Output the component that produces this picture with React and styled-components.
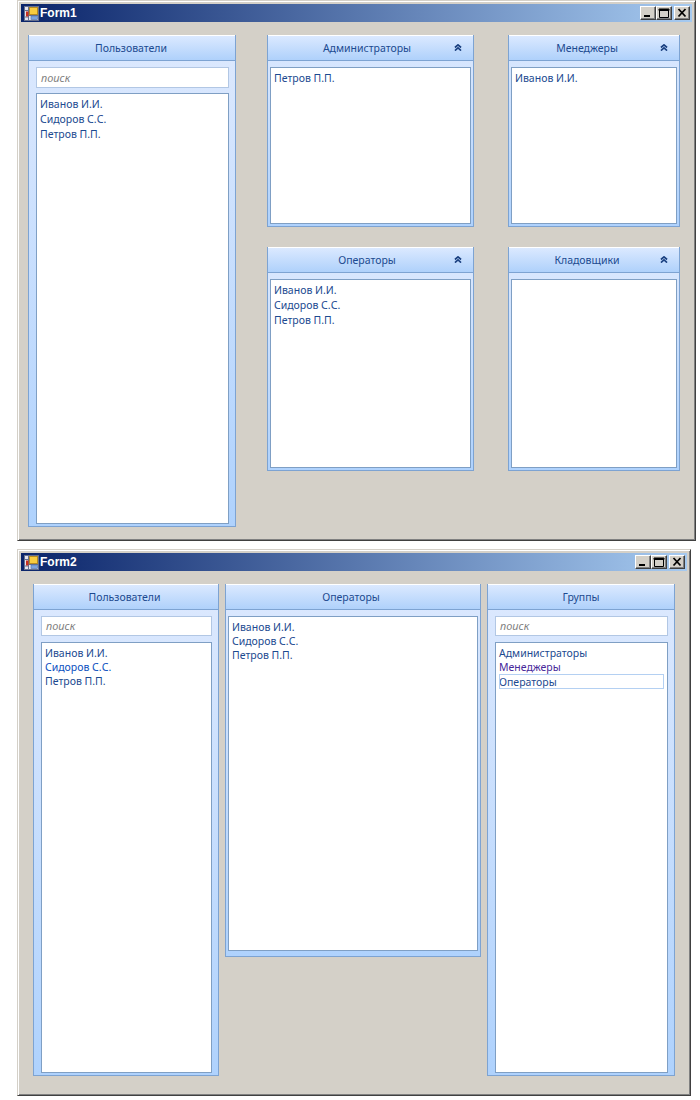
import React from 'react';
import styled, { createGlobalStyle } from 'styled-components';

const FONT = '"Noto Sans", "DejaVu Sans", sans-serif';
const C_TEXT = '#1c4a90';
const C_BORDER = '#7da3d2';
const C_LIST_BORDER = '#7f9fc4';

const GlobalStyle = createGlobalStyle`
  html, body {
    margin: 0;
    padding: 0;
    background: #fff;
  }
`;

const Page = styled.div`
  display: flex;
  flex-direction: column;
  gap: 8px;
  padding-left: 17px;
  font-family: ${FONT};
`;

const Window = styled.div`
  box-sizing: border-box;
  width: ${({ $width }) => $width}px;
  height: ${({ $height }) => $height}px;
  padding: 3px;
  background: #d4d0c8;
  border: 1px solid;
  border-color: #d4d0c8 #404040 #404040 #d4d0c8;
  box-shadow: inset 1px 1px 0 #fff, inset -1px -1px 0 #808080;
  display: flex;
  flex-direction: column;
`;

const TitleBar = styled.div`
  height: 18px;
  flex: none;
  display: flex;
  align-items: center;
  padding: 0 2px 0 3px;
  background: linear-gradient(90deg, #0a246a, #a6caf0);
`;

const TitleText = styled.span`
  margin-left: 1px;
  flex: 1;
  color: #fff;
  font: bold 12px "Liberation Sans", sans-serif;
`;

const WinButton = styled.button`
  box-sizing: border-box;
  width: 16px;
  height: 14px;
  margin-left: ${({ $gap }) => $gap || 0}px;
  padding: 0;
  display: flex;
  align-items: center;
  justify-content: center;
  background: #d4d0c8;
  border: 1px solid;
  border-color: #fff #404040 #404040 #fff;
  box-shadow: inset -1px -1px 0 #808080;
`;

const WindowBody = styled.div`
  flex: 1;
  min-height: 0;
  display: flex;
  gap: ${({ $gap }) => $gap}px;
  padding: 13px 0 0 ${({ $left }) => $left}px;
`;

const GroupGrid = styled.div`
  display: grid;
  grid-template-columns: 207px 172px;
  grid-template-rows: 192px 224px;
  gap: 20px 34px;
`;

const Panel = styled.section`
  box-sizing: border-box;
  flex: none;
  width: ${({ $width }) => ($width ? `${$width}px` : 'auto')};
  height: ${({ $height }) => ($height ? `${$height}px` : 'auto')};
  display: flex;
  flex-direction: column;
  border: 1px solid ${C_BORDER};
  border-top: 0;
  background: linear-gradient(180deg, #dde9fe, #afd2fd);
`;

const PanelHeader = styled.header`
  position: relative;
  box-sizing: border-box;
  height: 26px;
  flex: none;
  display: flex;
  align-items: center;
  justify-content: center;
  padding-right: ${({ $shift }) => $shift}px;
  border-top: 1px solid #fff;
  border-bottom: 1px solid ${C_BORDER};
  background: linear-gradient(180deg, #dbe9ff, #afd1fb);
  color: ${C_TEXT};
  font-size: 10.5px;
`;

const Collapse = styled.svg`
  position: absolute;
  right: 11px;
  top: 8px;
  width: 8px;
  height: 7px;
`;

const PanelBody = styled.div`
  flex: 1;
  min-height: 0;
  display: flex;
  flex-direction: column;
  gap: ${({ $gap }) => $gap}px;
  padding: ${({ $pad }) => $pad};
`;

const SearchBox = styled.div`
  box-sizing: border-box;
  flex: none;
  height: ${({ $height }) => $height}px;
  display: flex;
  align-items: center;
  padding: 0 0 1px 4px;
  background: #fff;
  border: 1px solid #b2c7e4;
  color: #808080;
  font-size: 11px;
  font-style: italic;
`;

const List = styled.ul`
  box-sizing: border-box;
  flex: 1;
  min-height: 0;
  margin: 0;
  padding: 3px 3px 2px;
  list-style: none;
  background: #fff;
  border: 1px solid ${C_LIST_BORDER};
`;

const Item = styled.li`
  box-sizing: border-box;
  height: ${({ $row }) => $row}px;
  line-height: ${({ $row }) => $row}px;
  color: ${({ $color }) => $color || C_TEXT};
  font-size: 10.5px;
  white-space: nowrap;
`;

const ActiveItem = styled(Item)`
  height: ${({ $row }) => $row + 1}px;
  line-height: ${({ $row }) => $row + 2}px;
  outline: 1px solid #b4d0f2;
  outline-offset: -1px;
`;

const AppIcon = () => (
  <svg width="15" height="15" viewBox="0 0 15 15">
    <rect x="0.5" y="0.5" width="14" height="14" fill="#e4e4f0" stroke="#66708e" />
    <path d="M4.5 1v13M1 4.5h3.5M1 11h3.5M5 9.5h9" stroke="#66708e" fill="none" />
    <rect x="2" y="5.5" width="2.5" height="5" fill="#c83020" />
    <rect x="5.5" y="1.5" width="8" height="7" fill="#f8cc40" stroke="#b88c20" />
    <rect x="7" y="10" width="6.5" height="3.5" fill="#7ca4e0" stroke="#5070a8" strokeWidth="0.6" />
  </svg>
);

const Chevrons = () => (
  <Collapse viewBox="0 0 9 8">
    <path d="M1 4 L4.5 1 L8 4 M1 7.5 L4.5 4.5 L8 7.5" fill="none" stroke="#1a4080" strokeWidth="1.9" />
  </Collapse>
);

const WindowTitle = ({ title }) => (
  <TitleBar>
    <AppIcon />
    <TitleText>{title}</TitleText>
    <WinButton aria-label="min">
      <svg width="12" height="10" viewBox="0 0 12 10"><rect x="2" y="7" width="6" height="2" fill="#000" /></svg>
    </WinButton>
    <WinButton aria-label="max">
      <svg width="12" height="10" viewBox="0 0 12 10"><path d="M1.5 1.5h9v8h-9z M1 1h10v1.5H1z" fill="none" stroke="#000" /></svg>
    </WinButton>
    <WinButton aria-label="close" $gap={2}>
      <svg width="12" height="10" viewBox="0 0 12 10"><path d="M2.5 1 L9.5 8.5 M9.5 1 L2.5 8.5" stroke="#000" strokeWidth="1.8" /></svg>
    </WinButton>
  </TitleBar>
);

const UserPanel = ({ title, width, height, collapsible, searchHeight, pad, row, shift = 2, items }) => (
  <Panel $width={width} $height={height}>
    <PanelHeader $shift={shift}>
      {title}
      {collapsible && <Chevrons />}
    </PanelHeader>
    <PanelBody $pad={pad} $gap={searchHeight ? 26 - searchHeight : 0}>
      {searchHeight && <SearchBox $height={searchHeight}>поиск</SearchBox>}
      <List>
        {items.map(({ name, color, active }) =>
          active ? (
            <ActiveItem key={name} $row={row} $color={color}>{name}</ActiveItem>
          ) : (
            <Item key={name} $row={row} $color={color}>{name}</Item>
          ),
        )}
      </List>
    </PanelBody>
  </Panel>
);

const PEOPLE = [{ name: 'Иванов И.И.' }, { name: 'Сидоров С.С.' }, { name: 'Петров П.П.' }];
const PAD_SMALL = '6px 2px 2px 2px';
const PAD_SEARCH = '6px 6px 2px 7px';

const App = () => (
  <>
    <GlobalStyle />
    <Page>
      <Window $width={679} $height={541}>
        <WindowTitle title="Form1" />
        <WindowBody $gap={31} $left={7}>
          <UserPanel title="Пользователи" width={208} height={492} searchHeight={21} pad={PAD_SEARCH} row={15} items={PEOPLE} />
          <GroupGrid>
            <UserPanel title="Администраторы" collapsible shift={7} pad={PAD_SMALL} row={15} items={[{ name: 'Петров П.П.' }]} />
            <UserPanel title="Менеджеры" collapsible shift={14} pad={PAD_SMALL} row={15} items={[{ name: 'Иванов И.И.' }]} />
            <UserPanel title="Операторы" collapsible shift={7} pad={PAD_SMALL} row={15} items={PEOPLE} />
            <UserPanel title="Кладовщики" collapsible shift={14} pad={PAD_SMALL} row={15} items={[]} />
          </GroupGrid>
        </WindowBody>
      </Window>
      <Window $width={674} $height={547}>
        <WindowTitle title="Form2" />
        <WindowBody $gap={6} $left={12}>
          <UserPanel
            title="Пользователи"
            width={186}
            height={492}
            searchHeight={20}
            pad={PAD_SEARCH}
            row={14}
            shift={3}
            items={[{ name: 'Иванов И.И.' }, { name: 'Сидоров С.С.', color: '#0b4fc0' }, { name: 'Петров П.П.' }]}
          />
          <UserPanel title="Операторы" width={256} height={373} pad="6px 2px 5px 2px" row={14} shift={4} items={PEOPLE} />
          <UserPanel
            title="Группы"
            width={188}
            height={492}
            searchHeight={20}
            pad={PAD_SEARCH}
            row={14}
            shift={0}
            items={[
              { name: 'Администраторы' },
              { name: 'Менеджеры', color: '#47289a' },
              { name: 'Операторы', active: true },
            ]}
          />
        </WindowBody>
      </Window>
    </Page>
  </>
);

export default App;
